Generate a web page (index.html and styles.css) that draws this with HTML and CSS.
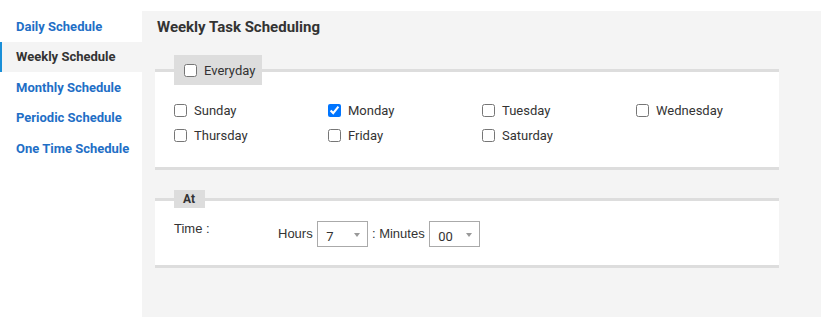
FILE: index.html
```html
<!DOCTYPE html>
<html lang="en">

<head>
    <title>Weekly Task Scheduling</title>
    <link rel="stylesheet" href="styles.css">
</head>

<body>
    <div class="page">
        <ul class="side-nav">
            <li><a href="#">Daily Schedule</a></li>
            <li class="active"><a href="#">Weekly Schedule</a></li>
            <li><a href="#">Monthly Schedule</a></li>
            <li><a href="#">Periodic Schedule</a></li>
            <li><a href="#">One Time Schedule</a></li>
        </ul>

        <div class="content">
            <h3 class="title">Weekly Task Scheduling</h3>

            <fieldset class="panel panel-days">
                <legend class="legend-check">
                    <label><input type="checkbox" id="everyday" /> Everyday</label>
                </legend>
                <div class="days">
                    <label class="day"><input type="checkbox" /> Sunday</label>
                    <label class="day"><input type="checkbox" checked /> Monday</label>
                    <label class="day"><input type="checkbox" /> Tuesday</label>
                    <label class="day"><input type="checkbox" /> Wednesday</label>
                    <label class="day"><input type="checkbox" /> Thursday</label>
                    <label class="day"><input type="checkbox" /> Friday</label>
                    <label class="day"><input type="checkbox" /> Saturday</label>
                </div>
            </fieldset>

            <fieldset class="panel panel-time">
                <legend class="legend-plain">At</legend>
                <table class="time-table">
                    <tr>
                        <td class="time-label">Time :</td>
                        <td class="time-fields">
                            Hours
                            <span class="select-wrap">
                                <select id="hours">
                                    <option>6</option>
                                    <option selected>7</option>
                                    <option>8</option>
                                </select>
                            </span>
                            : Minutes
                            <span class="select-wrap">
                                <select id="minutes">
                                    <option selected>00</option>
                                    <option>15</option>
                                    <option>30</option>
                                    <option>45</option>
                                </select>
                            </span>
                        </td>
                    </tr>
                </table>
            </fieldset>
        </div>
    </div>
</body>

</html>
```

FILE: styles.css
```css
body {
    font-family: Roboto, "Liberation Sans", Arial, sans-serif;
    background-color: #fff;
    color: #333;
    margin: 0;
    padding: 0;
}

.page {
    display: flex;
    height: 317px;
}

/* left navigation */
.side-nav {
    width: 142px;
    flex-shrink: 0;
    list-style: none;
    margin: 0;
    padding: 11px 0 0 0;
}

.side-nav li {
    height: 30.5px;
    display: flex;
    align-items: center;
    padding-left: 16px;
}

.side-nav li a {
    font-size: 13px;
    font-weight: 700;
    color: #1f6fc6;
    text-decoration: none;
}

.side-nav li.active {
    background-color: #f4f4f4;
    border-left: 2px solid #1a8fd8;
    padding-left: 14px;
}

.side-nav li.active a {
    color: #333;
}

/* main area */
.content {
    flex: 1;
    min-width: 0;
    margin-top: 11px;
    background-color: #f4f4f4;
    padding-top: 6px;
}

.title {
    margin: 0 0 18px 15px;
    font-size: 15px;
    line-height: 20px;
    font-weight: 700;
    color: #333;
}

.panel {
    width: 624px;
    box-sizing: border-box;
    margin: 0 0 0 13px;
    padding: 13px 0 19px 19px;
    border: 0;
    border-top: 3px solid #ddd;
    border-bottom: 3px solid #ddd;
    background-color: #fff;
    min-width: 0;
}

.panel-time {
    margin-top: 20px;
    padding-bottom: 18px;
}

.legend-check {
    height: 30px;
    padding: 0 7px 0 10px;
    background-color: #ddd;
    font-size: 13px;
}

.legend-check label {
    display: flex;
    align-items: center;
    height: 30px;
}

.legend-check input {
    margin: 0 7px 0 0;
}

.legend-plain {
    height: 18px;
    line-height: 18px;
    padding: 0 10px 0 9px;
    background-color: #ddd;
    font-size: 12px;
    font-weight: 700;
}

.days {
    display: grid;
    grid-template-columns: repeat(3, 154px) 1fr;
    grid-auto-rows: 25px;
}

.day {
    display: flex;
    align-items: center;
    font-size: 13px;
}

.day input {
    margin: 0 7px 0 0;
}

/* time row */
.time-table {
    border-collapse: collapse;
    font-family: "Liberation Sans", Arial, sans-serif;
    font-size: 13px;
}

.time-table td {
    padding: 0;
}

.time-label {
    width: 104px;
    vertical-align: top;
    line-height: 15px;
}

.time-fields {
    vertical-align: top;
    line-height: 26px;
}

.select-wrap {
    position: relative;
    display: inline-block;
    margin-left: 1px;
    vertical-align: top;
}

.select-wrap select {
    appearance: none;
    -webkit-appearance: none;
    display: block;
    width: 51px;
    height: 26px;
    margin: 0;
    padding: 4px 0 0 8px;
    border: 1px solid #aaa;
    border-radius: 0;
    background-color: #fff;
    font-family: Roboto, sans-serif;
    font-size: 13px;
    color: #333;
}

.select-wrap::after {
    content: "";
    position: absolute;
    right: 8px;
    top: 12px;
    border-left: 3px solid transparent;
    border-right: 3px solid transparent;
    border-top: 4px solid #999;
    pointer-events: none;
}
```
